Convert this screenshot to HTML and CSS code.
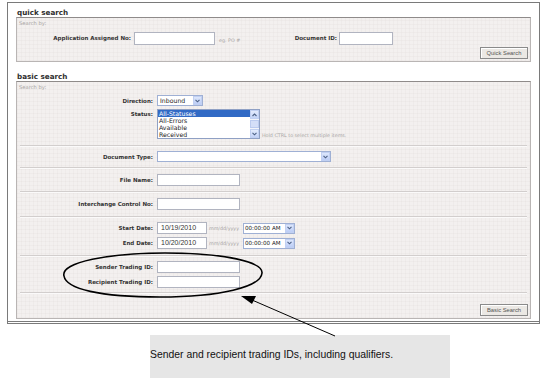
FILE: index.html
```html
<!DOCTYPE html>
<html>
<head>
<meta charset="utf-8">
<link rel="stylesheet" href="styles.css">
</head>
<body>
<div class="page">
  <div class="frame">
    <div class="title">quick search</div>
    <div class="panel quick">
      <div class="searchby">Search by:</div>
      <div class="qrow">
        <span class="qlabel">Application Assigned No:</span>
        <span class="input w81"></span>
        <span class="qhint">eg. PO #</span>
        <span class="qlabel2">Document ID:</span>
        <span class="input w54"></span>
      </div>
      <div class="btnrow"><span class="btn">Quick Search</span></div>
    </div>

    <div class="title t2">basic search</div>
    <div class="panel basic">
      <div class="searchby">Search by:</div>
      <div class="sec s1">
        <div class="row">
          <span class="label">Direction:</span>
          <span class="select w46"><span class="val">Inbound</span><span class="arrow"><svg width="5" height="4" viewBox="0 0 5 4"><path d="M0.5 0.8 L2.5 2.8 L4.5 0.8" fill="none" stroke="#4d6185" stroke-width="1.1"/></svg></span></span>
        </div>
        <div class="row top gap3">
          <span class="label lt">Status:</span>
          <span class="listbox">
            <span class="items">
              <span class="item sel">All-Statuses</span>
              <span class="item">All-Errors</span>
              <span class="item">Available</span>
              <span class="item">Received</span>
            </span>
            <span class="scroll">
              <span class="sbtn"><svg width="5" height="4" viewBox="0 0 5 4"><path d="M0.5 3 L2.5 1 L4.5 3" fill="none" stroke="#4d6185" stroke-width="1.1"/></svg></span>
              <span class="thumb"></span>
              <span class="sbtn"><svg width="5" height="4" viewBox="0 0 5 4"><path d="M0.5 0.8 L2.5 2.8 L4.5 0.8" fill="none" stroke="#4d6185" stroke-width="1.1"/></svg></span>
            </span>
          </span>
          <span class="hint hold">Hold CTRL to select multiple items.</span>
        </div>
      </div>
      <div class="sec s2">
        <div class="row">
          <span class="label">Document Type:</span>
          <span class="select w174"><span class="val"></span><span class="arrow"><svg width="5" height="4" viewBox="0 0 5 4"><path d="M0.5 0.8 L2.5 2.8 L4.5 0.8" fill="none" stroke="#4d6185" stroke-width="1.1"/></svg></span></span>
        </div>
      </div>
      <div class="sec s3">
        <div class="row">
          <span class="label">File Name:</span>
          <span class="input w83"></span>
        </div>
      </div>
      <div class="sec s4">
        <div class="row">
          <span class="label">Interchange Control No:</span>
          <span class="input w83"></span>
        </div>
      </div>
      <div class="sec s5">
        <div class="row">
          <span class="label">Start Date:</span>
          <span class="input w50 txt">10/19/2010</span>
          <span class="hint fmt">mm/dd/yyyy</span>
          <span class="select w52"><span class="val tm">00:00:00 AM</span><span class="arrow"><svg width="5" height="4" viewBox="0 0 5 4"><path d="M0.5 0.8 L2.5 2.8 L4.5 0.8" fill="none" stroke="#4d6185" stroke-width="1.1"/></svg></span></span>
        </div>
        <div class="row gap3">
          <span class="label">End Date:</span>
          <span class="input w50 txt">10/20/2010</span>
          <span class="hint fmt">mm/dd/yyyy</span>
          <span class="select w52"><span class="val tm">00:00:00 AM</span><span class="arrow"><svg width="5" height="4" viewBox="0 0 5 4"><path d="M0.5 0.8 L2.5 2.8 L4.5 0.8" fill="none" stroke="#4d6185" stroke-width="1.1"/></svg></span></span>
        </div>
      </div>
      <div class="sec s6">
        <div class="row">
          <span class="label">Sender Trading ID:</span>
          <span class="input w83"></span>
        </div>
        <div class="row gap3">
          <span class="label">Recipient Trading ID:</span>
          <span class="input w83"></span>
        </div>
      </div>
      <div class="btnsec"><span class="btn">Basic Search</span></div>
    </div>
  </div>
  <div class="callout">Sender and recipient trading IDs, including qualifiers.</div>

  <svg class="annot" width="545" height="378" viewBox="0 0 545 378">
    <path d="M64 276 C 60 262, 110 253, 165 253 C 225 253, 263 262, 262 273 C 261 287, 220 297, 160 297 C 100 297, 66 289, 64 276 Z" fill="none" stroke="#000" stroke-width="1.6"/>
    <line x1="335" y1="336" x2="252" y2="300" stroke="#000" stroke-width="1"/>
    <path d="M241 296 L256 296 L252 304 Z" fill="#000"/>
  </svg>
</div>
</body>
</html>
```

FILE: styles.css
```css
html, body {
  margin: 0;
  padding: 0;
  background: #fff;
}
.page {
  position: relative;
  width: 545px;
  height: 378px;
  overflow: hidden;
  font-family: "DejaVu Sans", Verdana, sans-serif;
}
.frame {
  margin: 2px 0 0 7px;
  width: 533px;
  height: 322px;
  box-sizing: border-box;
  border: 1px solid #7a7a7a;
  border-bottom: 3px double #7a7a7a;
  padding: 5px 8px 0 8px;
  background: #fff;
}
.title {
  font-weight: bold;
  font-size: 7.2px;
  line-height: 9px;
  height: 9px;
  color: #2e2e2e;
  padding-left: 1px;
}
.title.t2 {
  margin-top: 9px;
  height: 10px;
  line-height: 11px;
}
.panel {
  box-sizing: border-box;
  border: 1px solid #b9b5b4;
  border-top-color: #8f8b8a;
  background-color: #f3f0ef;
  background-image:
    repeating-linear-gradient(0deg, rgba(215,208,206,0.16) 0 1px, transparent 1px 4px),
    repeating-linear-gradient(90deg, rgba(215,208,206,0.16) 0 1px, transparent 1px 4px);
}
.quick { height: 45px; }
.basic { height: 238px; }
.searchby {
  font-size: 5.2px;
  line-height: 7px;
  color: #a8a4a3;
  padding: 2px 0 0 2px;
  height: 7px;
}
.qrow {
  display: flex;
  align-items: flex-end;
  margin-top: 5px;
  height: 13px;
  white-space: nowrap;
}
.qlabel {
  width: 114px;
  flex: none;
  text-align: right;
  font-weight: bold;
  font-size: 5.5px;
  line-height: 13px;
  color: #333;
}
.qrow .input { margin-left: 3px; height: 13px; flex: none; }
.qhint {
  margin-left: 4px;
  width: 40px;
  flex: none;
  font-size: 4.8px;
  color: #a6a3a2;
  line-height: 8px;
}
.qlabel2 {
  width: 78px;
  flex: none;
  text-align: right;
  font-weight: bold;
  font-size: 5.5px;
  line-height: 13px;
  color: #333;
}
.qrow .qlabel2 + .input { margin-left: 2px; }
.btnrow {
  display: flex;
  justify-content: flex-end;
  margin-top: 2px;
  padding-right: 2px;
}
.btn {
  box-sizing: border-box;
  width: 48px;
  height: 12px;
  border: 1px solid #8a8a8a;
  background: #ebe8e4;
  font-family: "Liberation Sans", Arial, sans-serif;
  font-size: 5.8px;
  line-height: 10px;
  color: #555;
  text-align: center;
  box-shadow: inset 1px 1px 0 #fff;
}
.input {
  box-sizing: border-box;
  display: block;
  height: 12px;
  background: #fff;
  border: 1px solid #b1b4c0;
}
.input.txt {
  font-family: "Liberation Sans", Arial, sans-serif;
  font-size: 7px;
  line-height: 10px;
  color: #333;
  padding-left: 3px;
}
.w81 { width: 81px; }
.w54 { width: 54px; }
.w83 { width: 83px; }
.w50 { width: 50px; }
.w46 { width: 46px; }
.w52 { width: 52px; }
.w174 { width: 174px; }

.sec {
  margin: 0 3px;
  border-bottom: 1px solid #d2cecd;
  box-shadow: 0 1px 0 #fbfafa;
}
.s1 { padding: 4px 0 6px; }
.s2 { padding: 5px 0 5px; }
.s3 { padding: 6px 0 5px; }
.s4 { padding: 6px 0 6px; }
.s5 { padding: 5px 0 6px; }
.s6 { padding: 5px 0 4px; }
.row {
  display: flex;
  align-items: center;
}
.row.top { align-items: flex-start; }
.row.gap3 { margin-top: 3px; }
.label {
  width: 133px;
  flex: none;
  text-align: right;
  font-weight: bold;
  font-size: 5.5px;
  line-height: 8px;
  color: #333;
  margin-right: 4px;
}
.label.lt { margin-top: 1px; }
.select {
  box-sizing: border-box;
  display: flex;
  align-items: center;
  height: 11px;
  background: #fff;
  border: 1px solid #9fb0d4;
}
.select .val {
  flex: 1;
  font-size: 6.2px;
  line-height: 9px;
  color: #222;
  padding-left: 2px;
  white-space: nowrap;
  overflow: hidden;
}
.select .val.tm { font-size: 5.6px; padding-left: 1px; }
.arrow {
  width: 9px;
  height: 9px;
  box-sizing: border-box;
  border: 1px solid #c1d0f2;
  background: linear-gradient(#dde7fc, #bccdf6);
  display: flex;
  align-items: center;
  justify-content: center;
}
.listbox {
  box-sizing: border-box;
  display: flex;
  width: 103px;
  height: 30px;
  background: #fff;
  border: 1px solid #8fa0c4;
}
.items {
  flex: 1;
  display: flex;
  flex-direction: column;
}
.item {
  font-size: 6.2px;
  line-height: 7px;
  height: 7px;
  padding-left: 1px;
  color: #222;
}
.item.sel {
  background: #316ac5;
  color: #fff;
}
.scroll {
  width: 9px;
  display: flex;
  flex-direction: column;
  background: #f2f4fb;
}
.sbtn {
  width: 9px;
  height: 9px;
  box-sizing: border-box;
  border: 1px solid #c1d0f2;
  background: linear-gradient(#e3ebfd, #c3d3f7);
  display: flex;
  align-items: center;
  justify-content: center;
}
.thumb {
  flex: 1;
  margin: 1px 0;
  background: #d4def8;
  border: 1px solid #bccbef;
}
.hint {
  font-size: 4.8px;
  color: #a6a3a2;
  white-space: nowrap;
}
.hold {
  align-self: flex-end;
  margin-left: 2px;
  line-height: 7px;
}
.fmt {
  margin-left: 2px;
  width: 34px;
}
.btnsec {
  display: flex;
  justify-content: flex-end;
  padding: 11px 2px 0 0;
}
.callout {
  margin: 11px 0 0 150px;
  width: 300px;
  height: 43px;
  box-sizing: border-box;
  background: #e6e6e6;
  font-family: "Liberation Sans", Arial, sans-serif;
  font-size: 10.4px;
  line-height: 12px;
  padding-top: 14px;
  color: #111;
}
.annot {
  position: absolute;
  left: 0;
  top: 0;
  pointer-events: none;
}
```
